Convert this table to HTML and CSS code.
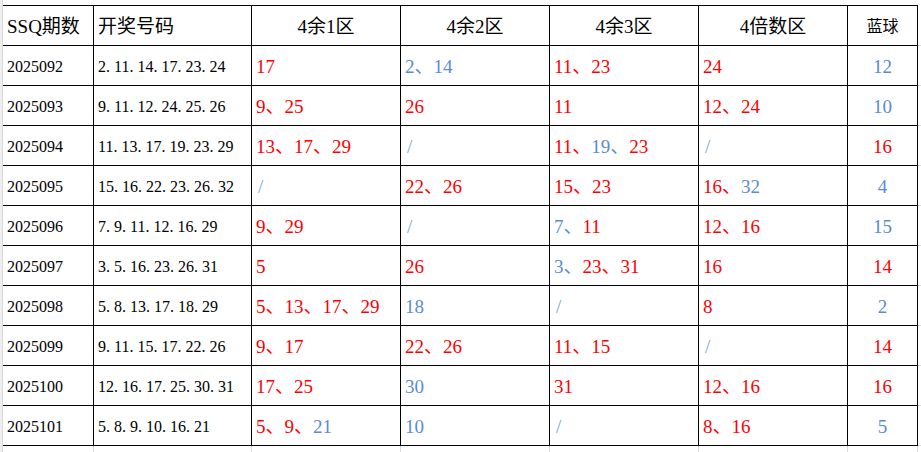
FILE: index.html
```html
<!DOCTYPE html>
<html lang="zh">
<head>
<meta charset="utf-8">
<title>SSQ</title>
<link rel="stylesheet" href="styles.css">
</head>
<body>
<div class="sheet">
  <div class="edge"></div>
  <div class="grid">
    <div class="c hd">SSQ期数</div>
    <div class="c hd">开奖号码</div>
    <div class="c hd ctr">4余1区</div>
    <div class="c hd ctr">4余2区</div>
    <div class="c hd ctr">4余3区</div>
    <div class="c hd ctr">4倍数区</div>
    <div class="c hd ctr sm">蓝球</div>
    <div class="x"></div>

    <div class="c k">2025092</div>
    <div class="c k">2<span class="p">.</span>11<span class="p">.</span>14<span class="p">.</span>17<span class="p">.</span>23<span class="p">.</span>24</div>
    <div class="c"><span class="r">17</span></div>
    <div class="c"><span class="b">2、14</span></div>
    <div class="c"><span class="r">11、23</span></div>
    <div class="c"><span class="r">24</span></div>
    <div class="c ctr"><span class="b">12</span></div>
    <div class="x"></div>

    <div class="c k">2025093</div>
    <div class="c k">9<span class="p">.</span>11<span class="p">.</span>12<span class="p">.</span>24<span class="p">.</span>25<span class="p">.</span>26</div>
    <div class="c"><span class="r">9、25</span></div>
    <div class="c"><span class="r">26</span></div>
    <div class="c"><span class="r">11</span></div>
    <div class="c"><span class="r">12、24</span></div>
    <div class="c ctr"><span class="b">10</span></div>
    <div class="x"></div>

    <div class="c k">2025094</div>
    <div class="c k">11<span class="p">.</span>13<span class="p">.</span>17<span class="p">.</span>19<span class="p">.</span>23<span class="p">.</span>29</div>
    <div class="c"><span class="r">13、17、29</span></div>
    <div class="c"><span class="b sl">/</span></div>
    <div class="c"><span class="r">11、</span><span class="b">19、</span><span class="r">23</span></div>
    <div class="c"><span class="b sl">/</span></div>
    <div class="c ctr"><span class="r">16</span></div>
    <div class="x"></div>

    <div class="c k">2025095</div>
    <div class="c k">15<span class="p">.</span>16<span class="p">.</span>22<span class="p">.</span>23<span class="p">.</span>26<span class="p">.</span>32</div>
    <div class="c"><span class="b sl">/</span></div>
    <div class="c"><span class="r">22、26</span></div>
    <div class="c"><span class="r">15、23</span></div>
    <div class="c"><span class="r">16、</span><span class="b">32</span></div>
    <div class="c ctr"><span class="b">4</span></div>
    <div class="x"></div>

    <div class="c k">2025096</div>
    <div class="c k">7<span class="p">.</span>9<span class="p">.</span>11<span class="p">.</span>12<span class="p">.</span>16<span class="p">.</span>29</div>
    <div class="c"><span class="r">9、29</span></div>
    <div class="c"><span class="b sl">/</span></div>
    <div class="c"><span class="b">7、</span><span class="r">11</span></div>
    <div class="c"><span class="r">12、16</span></div>
    <div class="c ctr"><span class="b">15</span></div>
    <div class="x"></div>

    <div class="c k">2025097</div>
    <div class="c k">3<span class="p">.</span>5<span class="p">.</span>16<span class="p">.</span>23<span class="p">.</span>26<span class="p">.</span>31</div>
    <div class="c"><span class="r">5</span></div>
    <div class="c"><span class="r">26</span></div>
    <div class="c"><span class="b">3、</span><span class="r">23、31</span></div>
    <div class="c"><span class="r">16</span></div>
    <div class="c ctr"><span class="r">14</span></div>
    <div class="x"></div>

    <div class="c k">2025098</div>
    <div class="c k">5<span class="p">.</span>8<span class="p">.</span>13<span class="p">.</span>17<span class="p">.</span>18<span class="p">.</span>29</div>
    <div class="c"><span class="r">5、13、17、29</span></div>
    <div class="c"><span class="b">18</span></div>
    <div class="c"><span class="b sl">/</span></div>
    <div class="c"><span class="r">8</span></div>
    <div class="c ctr"><span class="b">2</span></div>
    <div class="x"></div>

    <div class="c k">2025099</div>
    <div class="c k">9<span class="p">.</span>11<span class="p">.</span>15<span class="p">.</span>17<span class="p">.</span>22<span class="p">.</span>26</div>
    <div class="c"><span class="r">9、17</span></div>
    <div class="c"><span class="r">22、26</span></div>
    <div class="c"><span class="r">11、15</span></div>
    <div class="c"><span class="b sl">/</span></div>
    <div class="c ctr"><span class="r">14</span></div>
    <div class="x"></div>

    <div class="c k">2025100</div>
    <div class="c k">12<span class="p">.</span>16<span class="p">.</span>17<span class="p">.</span>25<span class="p">.</span>30<span class="p">.</span>31</div>
    <div class="c"><span class="r">17、25</span></div>
    <div class="c"><span class="b">30</span></div>
    <div class="c"><span class="r">31</span></div>
    <div class="c"><span class="r">12、16</span></div>
    <div class="c ctr"><span class="r">16</span></div>
    <div class="x"></div>

    <div class="c k">2025101</div>
    <div class="c k">5<span class="p">.</span>8<span class="p">.</span>9<span class="p">.</span>10<span class="p">.</span>16<span class="p">.</span>21</div>
    <div class="c"><span class="r">5、9、</span><span class="b">21</span></div>
    <div class="c"><span class="b">10</span></div>
    <div class="c"><span class="b sl">/</span></div>
    <div class="c"><span class="r">8、16</span></div>
    <div class="c ctr"><span class="b">5</span></div>
    <div class="x"></div>

    <div class="f"></div>
    <div class="f"></div>
    <div class="f"></div>
    <div class="f"></div>
    <div class="f"></div>
    <div class="f"></div>
    <div class="f"></div>
    <div class="fx"></div>
  </div>
</div>
</body>
</html>
```
FILE: styles.css
```css
html, body {
  margin: 0;
  padding: 0;
  background: #fff;
}
body {
  font-family: "Liberation Serif", "Noto Sans CJK SC", serif;
  color: #000;
}
.sheet {
  display: flex;
  height: 452px;
  overflow: hidden;
}
.edge {
  width: 2px;
  background: #efefef;
  border-right: 1px solid #d9d9d9;
  flex: none;
}
.grid {
  flex: 1;
  display: grid;
  grid-template-columns: 91px 158px 149px 149px 149px 149px 70px 1fr;
  grid-template-rows: 41px repeat(10, 40px) 7px;
  padding-top: 5px;
  align-content: start;
}
.c {
  box-sizing: border-box;
  border-right: 1px solid #000;
  border-bottom: 1px solid #000;
  display: flex;
  align-items: center;
  padding: 3px 0 0 4px;
  font-size: 19px;
  line-height: 20px;
  white-space: nowrap;
}
.hd {
  border-top: 1px solid #000;
  padding-top: 2px;
}
.ctr {
  justify-content: center;
  padding-left: 0;
}
.sm {
  font-size: 16px;
}
.k {
  font-size: 16px;
}
.p {
  display: inline-block;
  width: 8px;
}
.r {
  color: #ff0000;
}
.b {
  color: #5a8ad6;
}
.sl {
  color: #7aa3e3;
  padding-left: 2px;
}
.x {
  box-sizing: border-box;
  border-bottom: 1px solid #dadada;
}
.f {
  box-sizing: border-box;
  border-right: 1px solid #dadada;
}
.fx {
  box-sizing: border-box;
}
```
